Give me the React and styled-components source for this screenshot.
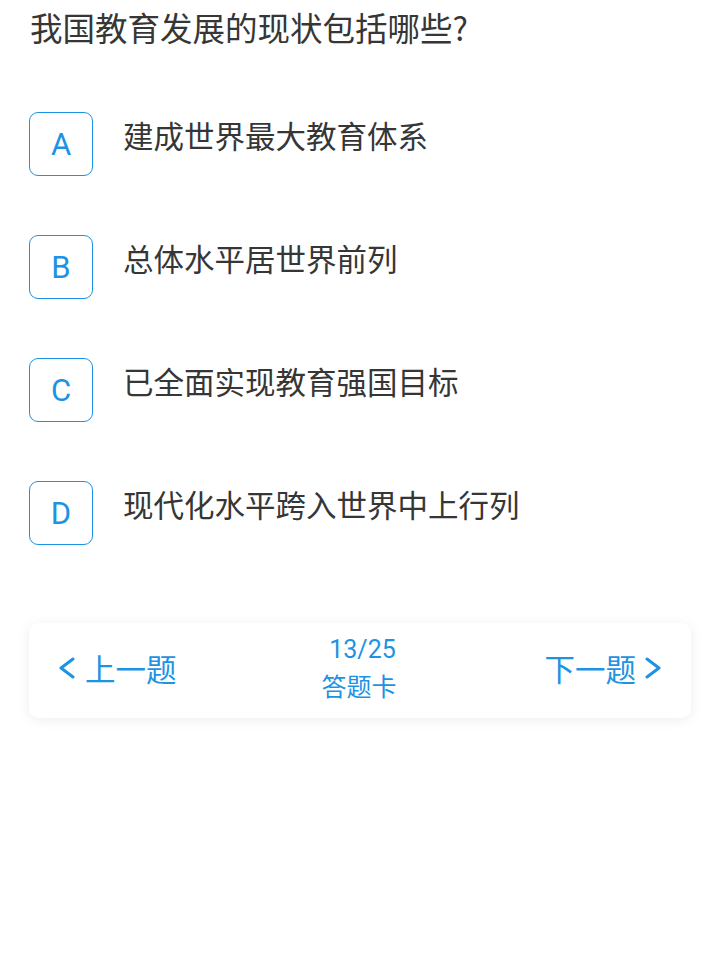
import React from 'react';
import styled, { createGlobalStyle } from 'styled-components';

const BLUE = '#1d93e3';

const GlobalStyle = createGlobalStyle`
  html, body {
    margin: 0;
    padding: 0;
    background: #ffffff;
  }
  body {
    font-family: Roboto, "Noto Sans CJK SC", sans-serif;
  }
`;

const Page = styled.div`
  padding: 5px 29px 40px;
`;

const Title = styled.h1`
  margin: 0 0 0 1px;
  font-family: "Noto Sans CJK SC", sans-serif;
  font-size: 32.5px;
  font-weight: 400;
  line-height: 44px;
  color: #363636;
`;

const OptionList = styled.div`
  display: flex;
  flex-direction: column;
  gap: 59px;
  margin-top: 63px;
`;

const Option = styled.div`
  display: flex;
  align-items: flex-start;
  gap: 30px;
`;

const Letter = styled.div`
  box-sizing: border-box;
  width: 64px;
  height: 64px;
  flex-shrink: 0;
  border: 1.5px solid ${BLUE};
  border-radius: 9px;
  display: flex;
  align-items: center;
  justify-content: center;
  font-family: Roboto, sans-serif;
  font-size: 31px;
  color: ${BLUE};
`;

const OptionText = styled.div`
  font-family: "Noto Sans CJK SC", sans-serif;
  font-size: 30.5px;
  line-height: 46px;
  color: #363636;
`;

const NavCard = styled.div`
  box-sizing: border-box;
  margin-top: 78px;
  height: 95px;
  border-radius: 10px;
  background: #ffffff;
  box-shadow: 0 2px 14px rgba(0, 0, 0, 0.07);
  display: flex;
  align-items: center;
  justify-content: space-between;
  padding: 0 29px 6px;
  color: ${BLUE};
`;

const NavButton = styled.div`
  display: flex;
  align-items: center;
  gap: ${(p) => p.$gap}px;
  font-family: "Noto Sans CJK SC", sans-serif;
  font-size: 30.5px;
  line-height: 40px;
`;

const Counter = styled.div`
  display: flex;
  flex-direction: column;
  align-items: center;
  margin-left: 4px;
`;

const Count = styled.div`
  font-family: Roboto, sans-serif;
  font-size: 25px;
  line-height: 34px;
`;

const CardLabel = styled.div`
  font-family: "Noto Sans CJK SC", sans-serif;
  font-size: 25px;
  line-height: 36px;
  margin-left: -7px;
`;

function Chevron({ dir }) {
  const points = dir === 'left' ? '15,2 3,11 15,20' : '3,2 15,11 3,20';
  return (
    <svg width="18" height="22" viewBox="0 0 18 22">
      <polyline
        points={points}
        fill="none"
        stroke={BLUE}
        strokeWidth="3"
        strokeLinecap="round"
        strokeLinejoin="round"
      />
    </svg>
  );
}

const options = [
  { key: 'A', text: '建成世界最大教育体系' },
  { key: 'B', text: '总体水平居世界前列' },
  { key: 'C', text: '已全面实现教育强国目标' },
  { key: 'D', text: '现代化水平跨入世界中上行列' },
];

export default function App() {
  return (
    <Page>
      <GlobalStyle />
      <Title>我国教育发展的现状包括哪些?</Title>
      <OptionList>
        {options.map((o) => (
          <Option key={o.key}>
            <Letter>{o.key}</Letter>
            <OptionText>{o.text}</OptionText>
          </Option>
        ))}
      </OptionList>
      <NavCard>
        <NavButton $gap={9}>
          <Chevron dir="left" />
          <span>上一题</span>
        </NavButton>
        <Counter>
          <Count>13/25</Count>
          <CardLabel>答题卡</CardLabel>
        </Counter>
        <NavButton $gap={8}>
          <span>下一题</span>
          <Chevron dir="right" />
        </NavButton>
      </NavCard>
    </Page>
  );
}
